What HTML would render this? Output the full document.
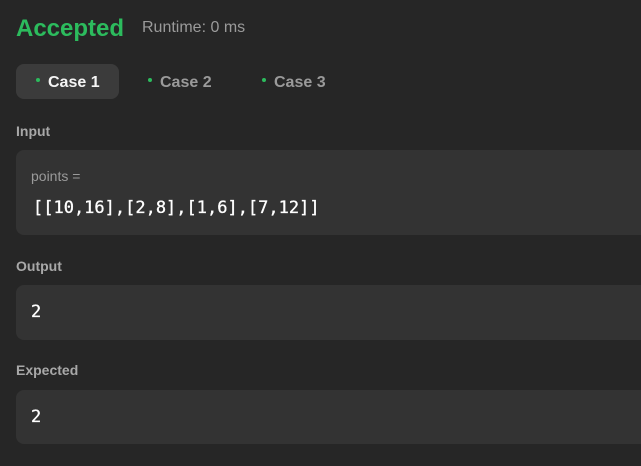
<!DOCTYPE html>
<html><head><style>
body{margin:0;width:641px;height:466px;background:#262626;font-family:"Liberation Sans",sans-serif;overflow:hidden;position:relative}
.a{position:absolute}
.box{position:absolute;left:16px;width:640px;background:#333333;border-radius:8px}
.lbl{position:absolute;left:16px;font-size:14px;font-weight:bold;color:#a8a8a8}
.mono{font-family:"DejaVu Sans Mono",monospace;font-size:17px;color:#ffffff;position:absolute;left:17px;-webkit-text-stroke:0.3px #fff}
.tab{position:absolute;top:64px;height:35px;line-height:37px;font-size:16px;font-weight:bold;color:#9a9a9a}
.dot{display:inline-block;width:4px;height:4px;border-radius:50%;background:#2cbb5d;vertical-align:middle;margin-right:8px;position:relative;top:-3px}
</style></head><body>
<div class="a" style="left:16px;top:15px;font-size:24px;font-weight:bold;color:#2cbb5d">Accepted</div>
<div class="a" style="left:142px;top:19px;font-size:16px;color:#9a9a9a">Runtime: 0 ms</div>
<div class="tab" style="left:16px;width:103px;background:#3b3b3b;border-radius:8px;color:#f5f5f5"><span style="margin-left:20px"><span class="dot"></span>Case 1</span></div>
<div class="tab" style="left:148px"><span class="dot"></span>Case 2</div>
<div class="tab" style="left:262px"><span class="dot"></span>Case 3</div>
<div class="lbl" style="top:123px">Input</div>
<div class="box" style="top:150px;height:85px">
<div class="a" style="left:15px;top:18px;font-size:14px;color:#9a9a9a">points =</div>
<div class="mono" style="top:48px">[[10,16],[2,8],[1,6],[7,12]]</div>
</div>
<div class="lbl" style="top:258px">Output</div>
<div class="box" style="top:285px;height:55px"><div class="mono" style="top:17px;left:15px">2</div></div>
<div class="lbl" style="top:362px">Expected</div>
<div class="box" style="top:390px;height:54px"><div class="mono" style="top:17px;left:15px">2</div></div>
</body></html>
